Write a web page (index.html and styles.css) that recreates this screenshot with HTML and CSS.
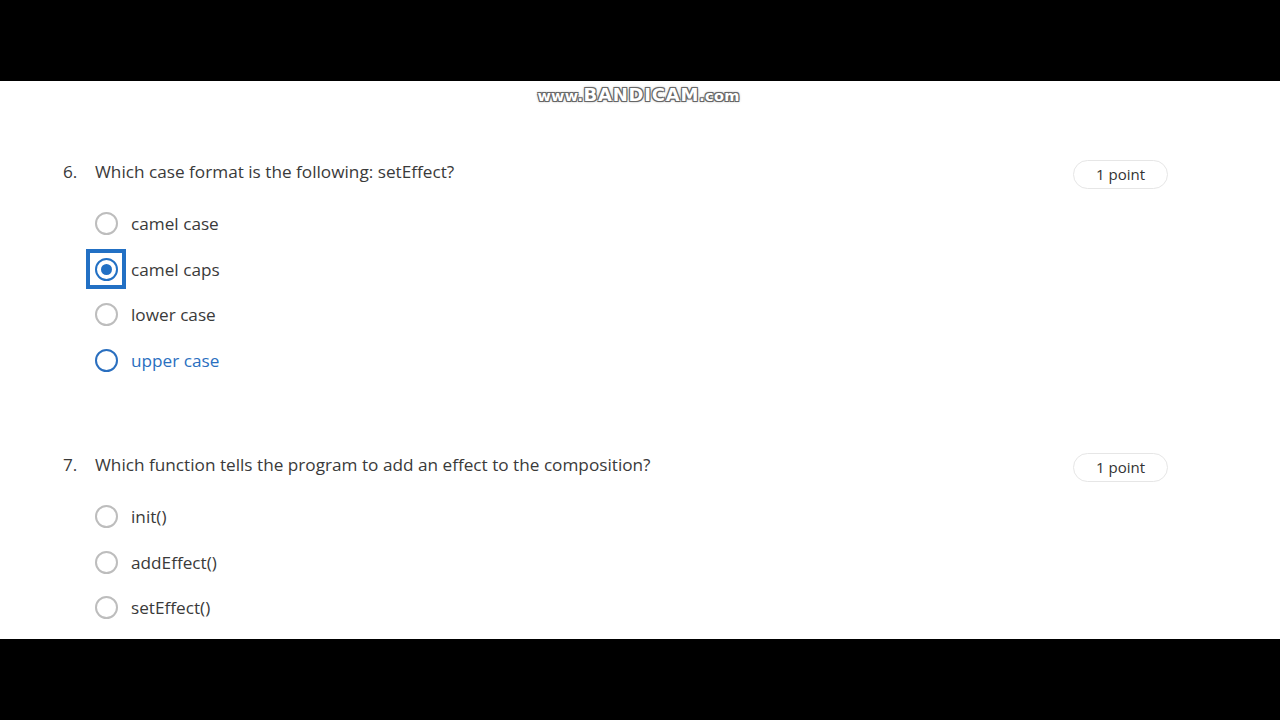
FILE: index.html
```html
<!DOCTYPE html>
<html>
<head>
<meta charset="utf-8">
<link rel="stylesheet" href="styles.css">
</head>
<body>
<div class="screen">
  <div class="bar"></div>
  <main class="page">
    <div class="watermark">www.<span class="big">BANDICAM</span>.com</div>

    <section class="question q6">
      <div class="q-head">
        <span class="q-num">6.</span>
        <span class="q-text">Which case format is the following: setEffect?</span>
        <span class="points">1 point</span>
      </div>
      <ul class="options">
        <li class="option"><span class="radio-wrap"><span class="radio"></span></span><span class="label">camel case</span></li>
        <li class="option"><span class="radio-wrap focused"><span class="radio checked"></span></span><span class="label">camel caps</span></li>
        <li class="option"><span class="radio-wrap"><span class="radio"></span></span><span class="label">lower case</span></li>
        <li class="option hover"><span class="radio-wrap"><span class="radio"></span></span><span class="label">upper case</span></li>
      </ul>
    </section>

    <section class="question q7">
      <div class="q-head">
        <span class="q-num">7.</span>
        <span class="q-text">Which function tells the program to add an effect to the composition?</span>
        <span class="points">1 point</span>
      </div>
      <ul class="options">
        <li class="option"><span class="radio-wrap"><span class="radio"></span></span><span class="label">init()</span></li>
        <li class="option"><span class="radio-wrap"><span class="radio"></span></span><span class="label">addEffect()</span></li>
        <li class="option"><span class="radio-wrap"><span class="radio"></span></span><span class="label">setEffect()</span></li>
      </ul>
    </section>
  </main>
  <div class="bar"></div>
</div>
</body>
</html>
```
FILE: styles.css
```css
* { box-sizing: border-box; }
html, body { margin: 0; padding: 0; background: #000; }
body { font-family: "Open Sans", "Noto Sans", sans-serif; color: #3a3a3a; }

.screen { width: 1280px; height: 720px; display: flex; flex-direction: column; overflow: hidden; }
.bar { height: 81px; background: #000; flex: none; }
.page {
  position: relative;
  height: 558px;
  background: #fff;
  padding: 76px 112px 0 63px;
  overflow: hidden;
}

.watermark {
  position: absolute;
  top: 3px;
  left: 0;
  right: 0;
  text-align: center;
  font-family: "DejaVu Sans", sans-serif;
  font-weight: bold;
  font-size: 14.5px;
  color: #fff;
  letter-spacing: 0.3px;
  text-shadow: -1px -1px 0 #666, 1px -1px 0 #666, -1px 1px 0 #666, 1px 1px 0 #666, 0 0 3px #444;
  margin-left: -3px;
}
.watermark .big { font-size: 18px; letter-spacing: 0.8px; }

.question { display: flex; flex-direction: column; }
.q7 { margin-top: 67px; }

.q-head { display: flex; align-items: flex-start; height: 30px; font-size: 17.2px; }
.q-num { width: 32px; line-height: 30px; }
.q-text { flex: 1; line-height: 30px; }
.points {
  margin-top: 3px;
  height: 29px;
  width: 95px;
  border: 1px solid #e6e6e6;
  border-radius: 15px;
  font-size: 15px;
  line-height: 27px;
  text-align: center;
  color: #333;
}

.options { list-style: none; margin: 14px 0 0; padding: 0 0 0 43px; }
.option { height: 45.5px; display: flex; align-items: center; font-size: 17.2px; }

.radio-wrap {
  width: 40px; height: 40px; margin-left: -20px; margin-right: 5px;
  display: flex; align-items: center; justify-content: center;
  border: 4px solid transparent;
  flex: none;
}
.radio-wrap.focused { border-color: #2270c4; }

.radio {
  width: 23px; height: 23px; border-radius: 50%;
  border: 2px solid #bdbdbd;
  background: #fff;
  display: flex; align-items: center; justify-content: center;
  margin-left: 1px;
}
.radio.checked { border-color: #2270c4; }
.radio.checked::after { content: ""; width: 11px; height: 11px; border-radius: 50%; background: #2270c4; }

.option.hover .radio { border-color: #2a6fbf; }
.option.hover .label { color: #2a6fbf; }
```
